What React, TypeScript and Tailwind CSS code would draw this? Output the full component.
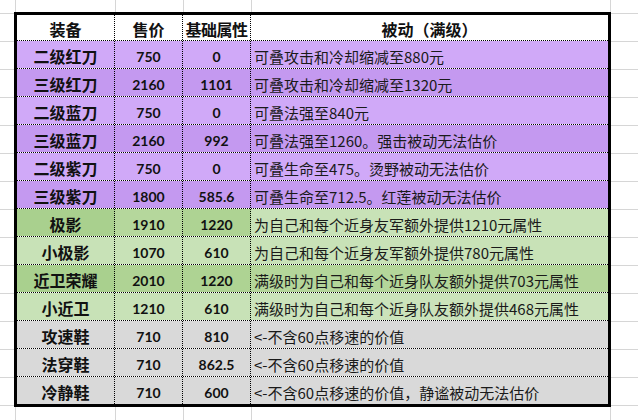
import type { ReactNode } from "react";

type Row = {
  name: string;
  price: string;
  base: string;
  desc: string;
  bg: [string, string, string, string];
};

const lightPurple = "bg-[#d0a9f8]";
const deepPurple = "bg-[#c499f0]";
const lightGreen = "bg-[#c8e2b7]";
const gray = "bg-[#d9d9d9]";

const rows: Row[] = [
  { name: "二级红刀", price: "750", base: "0", desc: "可叠攻击和冷却缩减至880元", bg: [lightPurple, lightPurple, lightPurple, lightPurple] },
  { name: "三级红刀", price: "2160", base: "1101", desc: "可叠攻击和冷却缩减至1320元", bg: [deepPurple, deepPurple, deepPurple, deepPurple] },
  { name: "二级蓝刀", price: "750", base: "0", desc: "可叠法强至840元", bg: [lightPurple, lightPurple, lightPurple, lightPurple] },
  { name: "三级蓝刀", price: "2160", base: "992", desc: "可叠法强至1260。强击被动无法估价", bg: [deepPurple, deepPurple, deepPurple, deepPurple] },
  { name: "二级紫刀", price: "750", base: "0", desc: "可叠生命至475。烫野被动无法估价", bg: [lightPurple, lightPurple, lightPurple, lightPurple] },
  { name: "三级紫刀", price: "1800", base: "585.6", desc: "可叠生命至712.5。红莲被动无法估价", bg: [deepPurple, deepPurple, deepPurple, deepPurple] },
  { name: "极影", price: "1910", base: "1220", desc: "为自己和每个近身友军额外提供1210元属性", bg: ["bg-[#a9d08e]", "bg-[#b5d79c]", "bg-[#aed393]", lightGreen] },
  { name: "小极影", price: "1070", base: "610", desc: "为自己和每个近身友军额外提供780元属性", bg: [lightGreen, lightGreen, lightGreen, lightGreen] },
  { name: "近卫荣耀", price: "2010", base: "1220", desc: "满级时为自己和每个近身队友额外提供703元属性", bg: ["bg-[#a9d08e]", "bg-[#afd394]", "bg-[#aed393]", "bg-[#b4d69a]"] },
  { name: "小近卫", price: "1210", base: "610", desc: "满级时为自己和每个近身队友额外提供468元属性", bg: [lightGreen, lightGreen, lightGreen, "bg-[#cbe3bb]"] },
  { name: "攻速鞋", price: "710", base: "810", desc: "<-不含60点移速的价值", bg: [gray, gray, gray, gray] },
  { name: "法穿鞋", price: "710", base: "862.5", desc: "<-不含60点移速的价值", bg: [gray, gray, gray, gray] },
  { name: "冷静鞋", price: "710", base: "600", desc: "<-不含60点移速的价值，静谧被动无法估价", bg: [gray, gray, gray, gray] },
];

const cjk = "font-['Microsoft_YaHei','Noto_Sans_CJK_SC',sans-serif]";
const num = "font-['Lato','Noto_Sans_CJK_SC',sans-serif]";

function Cell({ className, children }: { className: string; children?: ReactNode }) {
  return <div className={`flex items-center pt-[3px] ${className}`}>{children}</div>;
}

// Excel gridlines behind the sheet
function Gridlines() {
  const ys = [13];
  for (let y = 41; y < 420; y += 28) ys.push(y);
  const xs = [15, 115, 183, 251, 610];
  return (
    <svg className="absolute inset-0" width="638" height="420" aria-hidden>
      {ys.map((y) => (
        <line key={`h${y}`} x1="0" x2="638" y1={y + 0.5} y2={y + 0.5} stroke="#d6d6d6" />
      ))}
      {xs.map((x) => (
        <line key={`v${x}`} x1={x + 0.5} x2={x + 0.5} y1="0" y2="420" stroke="#d6d6d6" />
      ))}
    </svg>
  );
}

export default function App() {
  return (
    <div className="relative h-[420px] w-[638px] overflow-hidden bg-white text-[#111]">
      <Gridlines />
      <div className="relative ml-[14px] mt-[12px] w-[597px] border-[3px] border-black">
        <div className="flex h-[26px] border-b border-dotted border-black bg-white text-[16px] font-bold">
          <Cell className={`${cjk} w-[98px] justify-center border-r border-dotted border-black pt-0`}>装备</Cell>
          <Cell className={`${cjk} w-[68px] justify-center border-r border-dotted border-black pt-0`}>售价</Cell>
          <Cell className={`${cjk} w-[68px] justify-center border-r border-dotted border-black pt-0 tracking-[-0.5px]`}>基础属性</Cell>
          <Cell className={`${cjk} w-[357px] justify-center pt-0`}>被动（满级）</Cell>
        </div>
        {rows.map((row, i) => (
          <div
            key={row.name}
            className={`flex ${i === rows.length - 1 ? "h-[27px]" : "h-[28px] border-b border-dotted border-black"}`}
          >
            <Cell className={`${cjk} ${row.bg[0]} w-[98px] justify-center border-r border-dotted border-black text-[16px] font-bold`}>
              {row.name}
            </Cell>
            <Cell className={`${num} ${row.bg[1]} w-[68px] justify-center border-r border-dotted border-black text-[14px] font-bold`}>
              {row.price}
            </Cell>
            <Cell className={`${num} ${row.bg[2]} w-[68px] justify-center border-r border-dotted border-black text-[14px] font-bold`}>
              {row.base}
            </Cell>
            <Cell className={`${cjk} ${row.bg[3]} w-[357px] whitespace-nowrap pl-[3px] pt-[5px] text-[15px] text-[#1a1a1a]`}>
              {row.desc}
            </Cell>
          </div>
        ))}
      </div>
    </div>
  );
}
